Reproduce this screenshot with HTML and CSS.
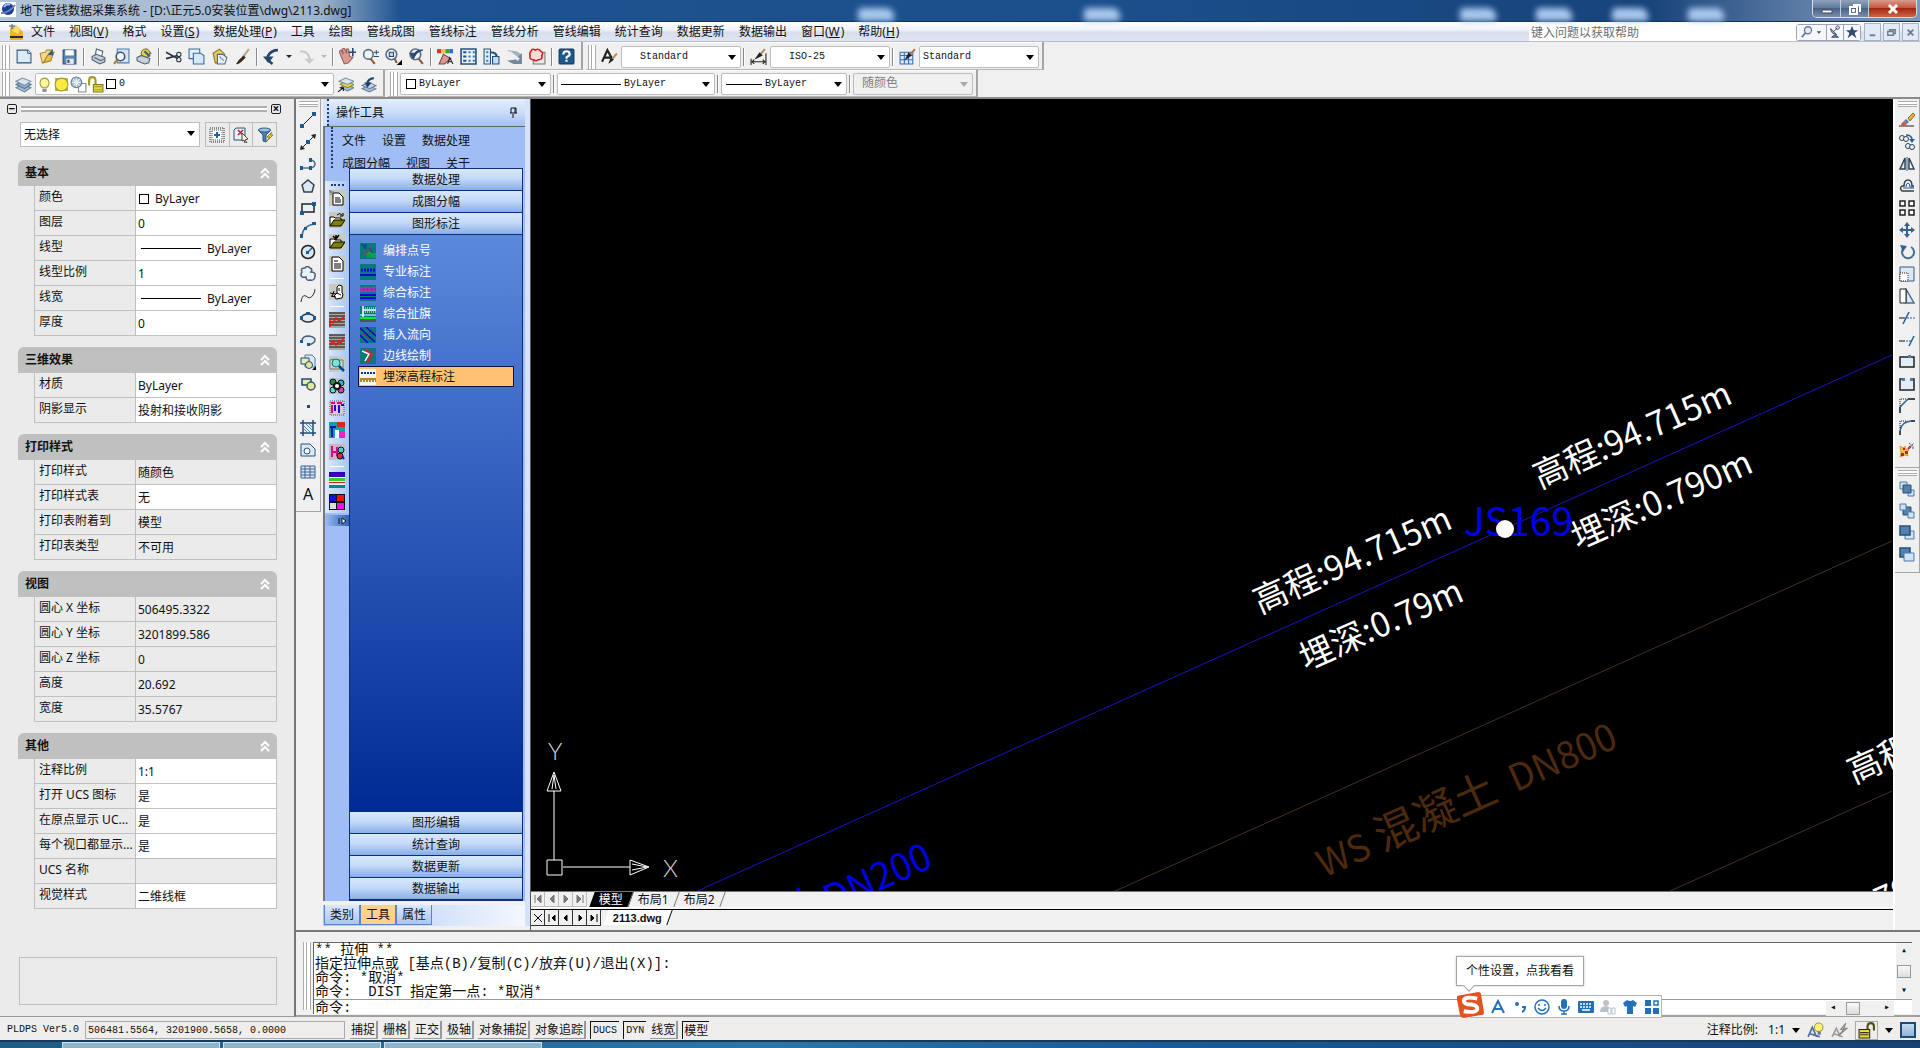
FILE: index.html
```html
<!DOCTYPE html>
<html lang="zh-CN">
<head>
  <meta charset="UTF-8">
  <meta name="viewport" content="width=device-width, initial-scale=1">
  <title>地下管线数据采集系统 - [D:\正元5.0安装位置\dwg\2113.dwg]</title>
  <link rel="stylesheet" href="styles.css">
</head>
<body>
  <header class="titlebar">
    <svg class="app-icon" viewBox="0 0 16 16"><path fill="#fff" d="M0 1h16v15H0z"/><circle cx="8" cy="8" r="6" fill="#1b3c9c"/><path d="M4 6q3-4 6-2" stroke="#a9c4f2" stroke-width="2" fill="none"/><path d="M1 12Q9 12 15 4" stroke="#6d85a8" stroke-width="2" fill="none"/></svg>
    <h1>地下管线数据采集系统 - [D:\正元5.0安装位置\dwg\2113.dwg]</h1>
    <div class="desk"><i></i><i></i><i></i><i></i><i></i><i></i></div>
    <div class="window-buttons">
      <button aria-label="最小化"><svg viewBox="0 0 14 14"><path d="M2 8h10v3H2z" fill="#fff" stroke="#445"/></svg></button>
      <button aria-label="还原"><svg viewBox="0 0 14 14"><path d="M5 3h7v7M2 5h7v7H2zM5 8h1v1H5z" fill="none" stroke="#fff" stroke-width="2"/></svg></button>
      <button class="close" aria-label="关闭"><svg viewBox="0 0 14 14"><path d="M3 3l8 8M11 3l-8 8" stroke="#fff" stroke-width="3"/></svg></button>
    </div>
  </header>

  <nav class="menubar">
    <svg class="doc-icon" viewBox="0 0 16 16"><path fill="#f2b322" d="M2 4l6-3 7 7v8H2z"/><path fill="#f9dc6b" d="M8 1l4 5-2 4-6-3z"/><path fill="#1e3158" d="M2 12h13v2H2z"/><path d="M4 0v5M1 2h6" stroke="#3a5da0"/></svg>
    <a href="#">文件</a>
    <a href="#">视图(<u>V</u>)</a>
    <a href="#">格式</a>
    <a href="#">设置(<u>S</u>)</a>
    <a href="#">数据处理(<u>P</u>)</a>
    <a href="#">工具</a>
    <a href="#">绘图</a>
    <a href="#">管线成图</a>
    <a href="#">管线标注</a>
    <a href="#">管线分析</a>
    <a href="#">管线编辑</a>
    <a href="#">统计查询</a>
    <a href="#">数据更新</a>
    <a href="#">数据输出</a>
    <a href="#">窗口(<u>W</u>)</a>
    <a href="#">帮助(<u>H</u>)</a>
    <input class="help-search" type="text" placeholder="键入问题以获取帮助" aria-label="帮助搜索">
    <div class="search-buttons">
      <button class="wide" aria-label="搜索"><svg viewBox="0 0 24 16"><circle cx="8" cy="6" r="4" fill="#e4ebf6" stroke="#66758f" stroke-width="1.500"/><path d="M5 9l-4 5" stroke="#66758f" stroke-width="2"/><path d="M18 7h5l-2.500 3z" fill="#444"/></svg></button>
      <button aria-label="通讯中心"><svg viewBox="0 0 16 16"><path d="M3 4q0 6 7 7z" fill="#9aacc6" stroke="#34466b"/><path d="M6 8l5-5M8 11l-4 3h8z" stroke="#34466b" fill="#6b7fa3"/><circle cx="11" cy="3" r="2" fill="none" stroke="#34466b"/></svg></button>
      <button aria-label="收藏夹"><svg viewBox="0 0 16 16"><path d="M8 1l2 5h5l-4 3 2 6-5-4-5 4 2-6-4-3h5z" fill="#34496f"/></svg></button>
    </div>
    <div class="mdi-buttons">
      <button aria-label="最小化文档"><svg viewBox="0 0 16 16"><path d="M5 11h6" stroke="#6a7c8e" stroke-width="2"/></svg></button>
      <button aria-label="还原文档"><svg viewBox="0 0 16 16"><path d="M6 7V5h6v4h-2M4 7h6v4H4z" fill="none" stroke="#6a7c8e" stroke-width="1.500"/></svg></button>
      <button aria-label="关闭文档"><svg viewBox="0 0 16 16"><path d="M5 5l6 6M11 5l-6 6" stroke="#6a7c8e" stroke-width="2"/></svg></button>
    </div>
  </nav>

  <div class="toolbar-row">
    <div class="toolbar">
      <span class="grip"></span>
      <button aria-label="新建"><svg viewBox="0 0 16 16"><path d="M2 2h10l3 3v9H2z" fill="#dcebf8" stroke="#2f5478"/><path d="M12 2v3h3" fill="#fff" stroke="#2f5478"/></svg></button>
      <button aria-label="打开"><svg viewBox="0 0 16 16"><path d="M4 14L2 5l5-1 1-2h5l-2 9z" fill="#f3d98a" stroke="#b08a35"/><path d="M5 14l4-7 6-3-3 8z" fill="#e8c055" stroke="#a87d28"/><path d="M9 6l5-5v6" fill="#2d5f8c"/></svg></button>
      <button aria-label="保存"><svg viewBox="0 0 16 16"><path d="M2 2h12v13H2z" fill="#5b86ad" stroke="#2b4d70"/><path d="M4 2h8v5H4z" fill="#fff"/><path d="M5 10h7v5H5z" fill="#dfe8f0"/><path d="M6 11h2v3H6z" fill="#2b4d70"/></svg></button>
      <span class="sep"></span>
      <button aria-label="打印"><svg viewBox="0 0 16 16"><path d="M5 7l1-6 6 2-1 5z" fill="#fff" stroke="#4c5f75"/><path d="M2 8l4-2 8 3v4l-5 2-7-4z" fill="#c5cdd6" stroke="#4c5f75"/><path d="M4 9l6 3 4-2" fill="none" stroke="#4c5f75"/></svg></button>
      <button aria-label="预览"><svg viewBox="0 0 16 16"><path d="M4 1h11v13H4z" fill="#d2e4f5" stroke="#4d7ba5"/><circle cx="7" cy="8" r="4" fill="#f2f8ff" stroke="#3b5570" stroke-width="1.500"/><path d="M4 11l-3 4" stroke="#b97730" stroke-width="2"/></svg></button>
      <button aria-label="发布"><svg viewBox="0 0 16 16"><path d="M5 5l5-4 4 4-4 4z" fill="#fff" stroke="#5a6f86"/><circle cx="9" cy="5" r="4" fill="#f0cf3e" stroke="#8b7420"/><path d="M8 3l5 5" stroke="#2d5f8c" stroke-width="2"/><path d="M1 9l4-2 8 3-1 4-4 1-7-3z" fill="#c9d1da" stroke="#4c5f75"/></svg></button>
      <span class="sep"></span>
      <button aria-label="剪切"><svg viewBox="0 0 16 16"><path d="M1 4l11 6M1 10l11-3" stroke="#25303d" stroke-width="1.500"/><circle cx="13" cy="6" r="2" fill="none" stroke="#25303d"/><circle cx="13" cy="11" r="2" fill="none" stroke="#25303d"/></svg></button>
      <button aria-label="复制"><svg viewBox="0 0 16 16"><path d="M1 1h10v9H1z" fill="#e6f0f9" stroke="#3d6a93"/><path d="M5 5h7l3 2v8H5z" fill="#d7e8f6" stroke="#3d6a93"/></svg></button>
      <button aria-label="粘贴"><svg viewBox="0 0 16 16"><path d="M2 5l6-4 5 5-1 8H4z" fill="#e9c95c" stroke="#8e722a"/><path d="M6 6h5l4 3-2 6H6z" fill="#e7eff7" stroke="#4c6a86"/><path d="M8 8l4 4" stroke="#7d97b0"/></svg></button>
      <button aria-label="特性匹配"><svg viewBox="0 0 16 16"><path d="M14 1L8 9" stroke="#b9a68b" stroke-width="2"/><path d="M9 7l2 2-4 4q-3 3-5 2 2-4 7-8z" fill="#3a2a1c"/></svg></button>
      <span class="sep"></span>
      <button aria-label="放弃"><svg viewBox="0 0 16 16"><path d="M9 15q-6-4-4-8 3-5 9-5" fill="none" stroke="#23446d" stroke-width="2.500"/><path d="M0 8h10l-5 6z" fill="#23446d"/></svg></button>
      <button class="drop" aria-label="放弃列表"></button>
      <button aria-label="重做"><svg viewBox="0 0 16 16"><path d="M2 3q9 0 9 9" fill="none" stroke="#c9c9c9" stroke-width="2"/><path d="M6 10h9l-4 5z" fill="#c9c9c9"/></svg></button>
      <button class="drop off" aria-label="重做列表"></button>
      <span class="sep"></span>
      <button aria-label="平移"><svg viewBox="0 0 16 16"><path d="M2 8L0 3l2-1 2 4-1-5 2-1 2 5V1h2l1 7 3 1-4 5-4 1z" fill="#d99a94" stroke="#9c5f5b"/><path d="M13 0v8M9 4h7" stroke="#2c4a74" stroke-width="1.500"/></svg></button>
      <button aria-label="实时缩放"><svg viewBox="0 0 16 16"><circle cx="6" cy="6" r="4.500" fill="#eef4fa" stroke="#5e6f82" stroke-width="1.500"/><path d="M8 10l4 5" stroke="#8a5a30" stroke-width="2"/><path d="M11 4h5M13.500 2v4M11 8h5" stroke="#2c4a74"/></svg></button>
      <button aria-label="窗口缩放"><svg viewBox="0 0 16 16"><circle cx="6" cy="6" r="5" fill="#eef4fa" stroke="#5e6f82" stroke-width="1.500"/><path d="M4 4h4v4H4z" fill="#bcd3ea" stroke="#2c4a74"/><path d="M9 10l2 4" stroke="#8a5a30" stroke-width="2"/><path d="M16 11v5h-5z"/></svg></button>
      <button aria-label="缩放上一个"><svg viewBox="0 0 16 16"><circle cx="7" cy="6" r="5" fill="#eef4fa" stroke="#5e6f82" stroke-width="1.500"/><path d="M10 10l4 5" stroke="#8a5a30" stroke-width="2"/><path d="M2 5h6l-3 5zM5 7q3-6 9-5" fill="#2c4a74" stroke="#2c4a74"/></svg></button>
      <span class="sep"></span>
      <button aria-label="特性"><svg viewBox="0 0 16 16"><path d="M0 1h4v4H0z" fill="#d33"/><path d="M4 1h4v4H4z" fill="#e8c53b"/><path d="M8 1h4v4H8z" fill="#3b9c4c"/><path d="M12 1h3v4h-3z" fill="#36c"/><path d="M2 15l4-9 7 4-6 5z" fill="#d99a94" stroke="#7b4a45"/><path d="M10 15l2-6 3 6M11 13h3" stroke="#222" fill="none"/></svg></button>
      <button aria-label="设计中心"><svg viewBox="0 0 16 16"><path d="M1 1h14v14H1z" fill="#eaf2fa" stroke="#24507c" stroke-width="1.500"/><path d="M3 3h3v2H3zM3 7h3v2H3zM3 11h3v2H3z" fill="#24507c"/><path d="M8 3h2v2H8zM12 3h2v2h-2zM8 7h2v2H8zM12 7h2v2h-2zM8 11h2v2H8zM12 11h2v2h-2z" fill="#3b78b5"/></svg></button>
      <button aria-label="工具选项板"><svg viewBox="0 0 16 16"><path d="M1 1h6v14H1z" fill="#e8f0f8" stroke="#24507c"/><path d="M3 3h2v2H3zM3 7h2v2H3zM3 11h2v2H3z" fill="#3b78b5"/><path d="M7 4q6 0 6 5" fill="none" stroke="#24507c" stroke-width="2"/><path d="M9 8h6v7H9z" fill="#c9dcef" stroke="#24507c"/></svg></button>
      <button aria-label="图纸集"><svg viewBox="0 0 16 16"><path d="M1 2l9 1 5 3-4 3z" fill="#9fb2c2"/><path d="M15 5v10H7l-6-3 7-1z" fill="#74889a"/><path d="M3 4l9 7" stroke="#e9eff5" stroke-width="3"/></svg></button>
      <button aria-label="标记集"><svg viewBox="0 0 16 16"><path d="M4 4h11v11H4z" fill="#e3e8ee" stroke="#777"/><path d="M2 3q1-3 4-1 3-2 5 1 3 2 1 4 1 4-3 4-3 2-5 0-4 0-3-4-1-2 1-4z" fill="#f7dada" stroke="#c22" stroke-width="1.500"/></svg></button>
      <span class="sep"></span>
      <button aria-label="帮助"><svg viewBox="0 0 16 16"><rect x="1" y="1" width="14" height="14" rx="1" fill="#1f5788" stroke="#143b60"/><path d="M5 6q0-3 3-3t3 3q0 1-2 2-1 0-1 2M8 11v2" fill="none" stroke="#fff" stroke-width="2"/></svg></button>
    </div>
    <div class="toolbar">
      <span class="grip"></span>
      <button aria-label="文字样式"><svg viewBox="0 0 16 16"><path d="M1 13L6 2l5 9M3 9h6" fill="none" stroke="#222" stroke-width="2"/><path d="M15 5l-5 6" stroke="#b58d5a" stroke-width="2"/><path d="M9 9l3 2-5 4z" fill="#222"/></svg></button>
      <div class="combo style indent"><select aria-label="文字样式"><option>Standard</option></select></div>
      <span class="sep"></span>
      <button aria-label="标注样式"><svg viewBox="0 0 16 16"><path d="M14 1L9 7" stroke="#b58d5a" stroke-width="2"/><path d="M9 4l3 3-8 4z" fill="#222"/><path d="M1 10v6M15 5v11M2 13h12M4 11l-2 2 2 2M12 11l2 2-2 2" stroke="#222" fill="none"/></svg></button>
      <div class="combo style indent"><select aria-label="标注样式"><option>ISO-25</option></select></div>
      <span class="sep"></span>
      <button aria-label="表格样式"><svg viewBox="0 0 16 16"><path d="M1 4h12v11H1z" fill="#dbe8f7" stroke="#3b6fae"/><path d="M1 7h12M1 11h12M5 4v11M9 4v11" stroke="#3b6fae"/><path d="M15 1l-5 6" stroke="#a87a44" stroke-width="2"/><path d="M9 4l3 3-7 5z" fill="#222"/></svg></button>
      <div class="combo style"><select aria-label="表格样式"><option>Standard</option></select></div>
    </div>
  </div>

  <div class="toolbar-row">
    <div class="toolbar">
      <span class="grip"></span>
      <button aria-label="图层特性"><svg viewBox="0 0 16 16"><path d="M1 11l6-3 8 3-6 4z" fill="#a9bccd" stroke="#64809a"/><path d="M1 8l6-3 8 3-6 4z" fill="#8fb0d0" stroke="#50708f"/><path d="M1 5l6-3 8 3-6 4z" fill="#d9e4ee" stroke="#7792aa"/></svg></button>
      <div class="combo layer">
        <svg viewBox="0 0 16 16"><path d="M6 11Q3 8 4 5q1-3 4-3t4 3q1 3-2 6z" fill="#fdf7a0" stroke="#a3953a"/><path d="M6 12h4v3H6z" fill="#8d939b"/></svg>
        <svg viewBox="0 0 16 16"><path d="M2 2h12v12H2z" fill="#9bb04a"/><circle cx="8" cy="8" r="6" fill="#f6e943" stroke="#a89a24"/></svg>
        <svg viewBox="0 0 16 16"><path d="M8 7h7v8H8z" fill="#fff" stroke="#888"/><circle cx="6" cy="6" r="5" fill="#a9bdd0" stroke="#667f96"/><path d="M2 6h8M6 2v8M3 3l6 6M9 3L3 9" stroke="#e9eff5"/></svg>
        <svg viewBox="0 0 16 16"><path d="M2 9V4q0-3 3-3t3 3v4" fill="none" stroke="#a39a28" stroke-width="2"/><path d="M6 8h9v7H6z" fill="#e8dc3c" stroke="#7d761b"/><path d="M7 10h7M7 13h7" stroke="#a39a28"/></svg>
        <span class="swatch"></span>
        <select aria-label="图层"><option>0</option></select>
      </div>
      <button aria-label="置为当前"><svg viewBox="0 0 16 16"><path d="M3 11l5-3 8 3-6 3z" fill="#a9bccd" stroke="#64809a"/><path d="M3 8l5-3 8 3-6 3z" fill="#e9d84a" stroke="#94871e"/><path d="M2 5l6-3 8 3-6 3z" fill="#d9e4ee" stroke="#7792aa"/><path d="M1 15l5-4M3 11h3v3" stroke="#111" fill="none"/></svg></button>
      <button aria-label="上一个图层"><svg viewBox="0 0 16 16"><path d="M2 12l6-3 7 3-6 3z" fill="#a9bccd" stroke="#64809a"/><path d="M2 9l6-3 7 3-6 3z" fill="#c9d8e6" stroke="#64809a"/><path d="M4 6h7l-4 5z" fill="#23446d"/><path d="M7 7q0-4 6-5" fill="none" stroke="#23446d" stroke-width="2"/></svg></button>
    </div>
    <div class="toolbar">
      <span class="grip"></span>
      <div class="combo color"><span class="swatch"></span><select aria-label="颜色"><option>ByLayer</option></select></div>
      <span class="sep"></span>
      <div class="combo linetype"><span class="stroke long"></span><select aria-label="线型"><option>ByLayer</option></select></div>
      <span class="sep"></span>
      <div class="combo weight"><span class="stroke"></span><select aria-label="线宽"><option>ByLayer</option></select></div>
      <span class="sep"></span>
      <div class="combo style plot"><select aria-label="打印样式" disabled><option>随颜色</option></select></div>
    </div>
  </div>

  <div class="workspace">
    <aside class="properties">
      <div class="palette-head">
        <button aria-label="折叠">−</button>
        <span class="rails"></span>
        <button aria-label="关闭">×</button>
      </div>
      <div class="selection">
        <div class="combo"><select aria-label="选择对象"><option>无选择</option></select></div>
        <div class="selection-buttons">
          <button aria-label="快速选择"><svg viewBox="0 0 16 16"><path d="M1 1h14v14H1z" fill="none" stroke="#222" stroke-dasharray="1 1"/><path d="M3 3h10v10H3z" fill="#fff" stroke="#456" stroke-dasharray="1 1"/><path d="M8 5v6M5 8h6" stroke="#2560a0" stroke-width="2"/></svg></button>
          <button aria-label="选择对象"><svg viewBox="0 0 16 16"><path d="M3 1h9v12H1V3z" fill="#e4effa" stroke="#34506e"/><path d="M5 3l5 5M10 3L5 8" stroke="#b22" stroke-width="1.500"/><path d="M9 6l6 6-3 1 2 3-2 0-1-3-2 1z" fill="#fffbd0" stroke="#444"/></svg></button>
          <button aria-label="过滤"><svg viewBox="0 0 16 16"><path d="M1 3l5 5v6l3 1V8l5-5z" fill="#4b7fb2" stroke="#2f587f"/><ellipse cx="7.500" cy="3" rx="6" ry="2" fill="#9cc0e2" stroke="#2f587f"/><path d="M15 5l-5 5h3l-4 5 7-7h-3z" fill="#ffe23b" stroke="#8f7a13"/></svg></button>
        </div>
      </div>

      <h2>基本 <svg viewBox="0 0 10 12"><path d="M1 6l4-4 4 4M1 11l4-4 4 4"/></svg></h2>
      <table>
        <tr><th>颜色</th><td><span class="swatch"></span>ByLayer</td></tr>
        <tr><th>图层</th><td>0</td></tr>
        <tr><th>线型</th><td><span class="stroke long"></span>ByLayer</td></tr>
        <tr><th>线型比例</th><td>1</td></tr>
        <tr><th>线宽</th><td><span class="stroke long"></span>ByLayer</td></tr>
        <tr><th>厚度</th><td>0</td></tr>
      </table>
      <h2>三维效果 <svg viewBox="0 0 10 12"><path d="M1 6l4-4 4 4M1 11l4-4 4 4"/></svg></h2>
      <table>
        <tr><th>材质</th><td>ByLayer</td></tr>
        <tr><th>阴影显示</th><td>投射和接收阴影</td></tr>
      </table>
      <h2>打印样式 <svg viewBox="0 0 10 12"><path d="M1 6l4-4 4 4M1 11l4-4 4 4"/></svg></h2>
      <table>
        <tr class="locked"><th>打印样式</th><td>随颜色</td></tr>
        <tr><th>打印样式表</th><td>无</td></tr>
        <tr class="locked"><th>打印表附着到</th><td>模型</td></tr>
        <tr class="locked"><th>打印表类型</th><td>不可用</td></tr>
      </table>
      <h2>视图 <svg viewBox="0 0 10 12"><path d="M1 6l4-4 4 4M1 11l4-4 4 4"/></svg></h2>
      <table>
        <tr class="locked"><th>圆心 X 坐标</th><td>506495.3322</td></tr>
        <tr class="locked"><th>圆心 Y 坐标</th><td>3201899.586</td></tr>
        <tr class="locked"><th>圆心 Z 坐标</th><td>0</td></tr>
        <tr class="locked"><th>高度</th><td>20.692</td></tr>
        <tr class="locked"><th>宽度</th><td>35.5767</td></tr>
      </table>
      <h2>其他 <svg viewBox="0 0 10 12"><path d="M1 6l4-4 4 4M1 11l4-4 4 4"/></svg></h2>
      <table>
        <tr><th>注释比例</th><td>1:1</td></tr>
        <tr><th>打开 UCS 图标</th><td>是</td></tr>
        <tr><th>在原点显示 UC...</th><td>是</td></tr>
        <tr><th>每个视口都显示...</th><td>是</td></tr>
        <tr class="locked"><th>UCS 名称</th><td></td></tr>
        <tr><th>视觉样式</th><td>二维线框</td></tr>
      </table>
      <div class="hint"></div>
    </aside>

    <main class="main">
      <div class="upper">
        <div class="side-column">
          <div class="side-toolbar">
            <span class="grip-h"></span>
            <button aria-label="直线"><svg viewBox="0 0 16 16"><path d="M2 14L14 2" stroke="#222"/><path d="M0 12h4v4H0zM12 0h4v4h-4z" fill="#1c5a94"/></svg></button>
            <button aria-label="构造线"><svg viewBox="0 0 16 16"><path d="M1 15L15 1" stroke="#222"/><path d="M0 16l1-5 4 4zM16 0l-1 5-4-4z" fill="#222"/><path d="M6 6h4v4H6z" fill="#1c5a94"/></svg></button>
            <button aria-label="多段线"><svg viewBox="0 0 16 16"><path d="M1 12h10q4-1 4-4t-4-4" fill="none" stroke="#4b7295" stroke-width="1.500"/><path d="M0 10h3v4H0zM9 10h3v4H9zM9 2h3v4H9z" fill="#1c5a94"/></svg></button>
            <button aria-label="正多边形"><svg viewBox="0 0 16 16"><path d="M8 2l6 5-2 7H4L2 7z" fill="#dce9f5" stroke="#33414f" stroke-width="1.500"/></svg></button>
            <button aria-label="矩形"><svg viewBox="0 0 16 16"><path d="M2 4h12v8H2z" fill="#e8f1f9" stroke="#222" stroke-width="1.500"/><path d="M0 11h4v4H0zM12 2h4v4h-4z" fill="#1c5a94"/></svg></button>
            <button aria-label="圆弧"><svg viewBox="0 0 16 16"><path d="M2 15Q2 4 14 2" fill="none" stroke="#4b7295" stroke-width="1.500"/><path d="M0 12h3v4H0zM4 5h3v3H4zM12 0h4v3h-4z" fill="#1c5a94"/></svg></button>
            <button aria-label="圆"><svg viewBox="0 0 16 16"><circle cx="8" cy="8" r="6.500" fill="#dce9f5" stroke="#222" stroke-width="1.500"/><path d="M8 8l4-4" stroke="#1c5a94" stroke-width="1.500"/><path d="M6 7h3v3H6z" fill="#1c5a94"/></svg></button>
            <button aria-label="修订云线"><svg viewBox="0 0 16 16"><path d="M2 6q-2-4 3-4 2-3 5 0 3 1 1 4 5 0 4 4 0 5-5 4-4 1-4-3-5 1-5-2 0-2 1-3z" fill="#e8f1f9" stroke="#4b6076" stroke-width="1.500"/></svg></button>
            <button aria-label="样条曲线"><svg viewBox="0 0 16 16"><path d="M1 14q1-8 5-6 4 4 7-1 2-3 2-6" fill="none" stroke="#333"/></svg></button>
            <button aria-label="椭圆"><svg viewBox="0 0 16 16"><ellipse cx="8" cy="8" rx="6.500" ry="4" fill="#e1ecf6" stroke="#333" stroke-width="1.500"/><path d="M0 6h3v4H0zM13 6h3v4h-3zM6 2h4v3H6z" fill="#1c5a94"/></svg></button>
            <button aria-label="椭圆弧"><svg viewBox="0 0 16 16"><path d="M2 9q0-5 7-5 6 1 6 4t-6 5" fill="#e1ecf6" stroke="#4b6076" stroke-width="1.500"/><path d="M0 8h3v3H0zM7 11h3v3H7z" fill="#1c5a94"/></svg></button>
            <button aria-label="插入块"><svg viewBox="0 0 16 16"><path d="M5 1h7l3 3v9H5z" fill="#dce9f5" stroke="#4d7ba5"/><path d="M1 4h8v6H1z" fill="#e9eea8" stroke="#1c4b78"/><circle cx="9" cy="11" r="3.500" fill="#e3e69a" stroke="#1c4b78"/><path d="M16 12v4h-4z"/></svg></button>
            <button aria-label="创建块"><svg viewBox="0 0 16 16"><path d="M2 3h9v6H2z" fill="#e9eea8" stroke="#1c4b78" stroke-width="1.500"/><circle cx="11" cy="10" r="4" fill="#e3e69a" stroke="#3f5667" stroke-width="1.500"/></svg></button>
            <button aria-label="点"><svg viewBox="0 0 16 16"><path d="M7 7h3v3H7z" fill="#1c4b78"/></svg></button>
            <button aria-label="图案填充"><svg viewBox="0 0 16 16"><path d="M3 0v16M13 0v16M0 3h16M0 13h16" stroke="#1c4b78" stroke-width="1.500"/><path d="M4 6l6 6M4 9l3 3M6 4l6 6M9 4l3 3" stroke="#4a80b0"/></svg></button>
            <button aria-label="面域"><svg viewBox="0 0 16 16"><path d="M1 2h9l5 5v7H1z" fill="#dce9f5" stroke="#24507c"/><circle cx="7" cy="9" r="3" fill="#fff" stroke="#24507c"/></svg></button>
            <button aria-label="表格"><svg viewBox="0 0 16 16"><path d="M1 2h14v12H1z" fill="#dbe8f7" stroke="#3b6090"/><path d="M1 5h14M1 8h14M1 11h14M5 2v12M10 2v12" stroke="#3b6090"/></svg></button>
            <button class="letter" aria-label="多行文字">A</button>
          </div>
        </div>

        <section class="tool-panel">
          <h2><span>操作工具</span><svg viewBox="0 0 10 12"><path d="M3 1h5v5M2 6h7M3 1v5M5 7v4M7 1v5" fill="none" stroke="#111"/></svg></h2>
          <div class="panel-body">
            <nav class="panel-menu">
              <a href="#">文件</a><a href="#">设置</a><a href="#">数据处理</a><br>
              <a href="#">成图分幅</a><a href="#">视图</a><a href="#">关于</a>
            </nav>
            <div class="panel-columns">
              <div class="icon-strip">
                <div class="strip-items">
                  <button aria-label="新建工程"><svg viewBox="0 0 16 16"><path fill="#cbc9bd" d="M0 0h16v16H0z"/><path d="M4 3h6l4 4v8H4z" fill="#fff" stroke="#000"/><path d="M6 8h5M6 10h6M6 12h6" stroke="#000"/><path d="M0 2h5M2 0v5M0 0l4 4" stroke="#777"/></svg></button>
                  <button aria-label="打开工程"><svg viewBox="0 0 16 16"><path fill="#cbc9bd" d="M0 0h16v16H0z"/><path d="M1 14V5h4l1 1h6v2" fill="#ffe" stroke="#000"/><path d="M1 14l4-6h11l-4 6z" fill="#808000" stroke="#000"/><path d="M8 3q3-3 5 0M11 4h3V1" stroke="#000" fill="none"/></svg></button>
                  <button aria-label="关闭工程"><svg viewBox="0 0 16 16"><path fill="#cbc9bd" d="M0 0h16v16H0z"/><path d="M1 14V5h4l1 1h6v2" fill="#ffe" stroke="#000"/><path d="M1 14l4-6h11l-4 6z" fill="#808000" stroke="#000"/><path d="M7 5V1M4 2l3 3 3-4" stroke="#000" stroke-width="1.500" fill="none"/></svg></button>
                  <button aria-label="工程文档"><svg viewBox="0 0 16 16"><path fill="#cbc9bd" d="M0 0h16v16H0z"/><path d="M3 1h7l4 4v10H3z" fill="#fff" stroke="#000"/><path d="M5 5h4M5 8h7M5 10h7M5 12h7" stroke="#000"/></svg></button>
                  <hr>
                  <button aria-label="数据"><svg viewBox="0 0 16 16"><path fill="#cbc9bd" d="M0 0h16v16H0z"/><path d="M8 9V3l2-2 3 1v7l1 1-1 4-6 1-2-3z" fill="#fff" stroke="#000"/><path d="M1 9l6 1M2 12l5 1M5 7l-2 6M8 9l4 2M10 4v3" fill="none" stroke="#000"/></svg></button>
                  <hr>
                  <button aria-label="横断面"><svg viewBox="0 0 16 16"><path fill="#a9a69c" d="M0 0h16v16H0z"/><path d="M0 1h16M0 4h16M0 7h16M0 10h16M0 13h16" stroke="#111"/><path d="M1 15V9l3 2 3-5 3 3 6-5" fill="none" stroke="#e11" stroke-width="1.500"/></svg></button>
                  <button aria-label="纵断面"><svg viewBox="0 0 16 16"><path fill="#a9a69c" d="M0 0h16v16H0z"/><path d="M0 1h16M0 4h16M0 7h16M0 10h16M0 13h16" stroke="#111"/><path d="M1 11l3-4 3 4 3-4 2 2 3-6" fill="none" stroke="#e11" stroke-width="1.500"/></svg></button>
                  <button aria-label="查找"><svg viewBox="0 0 16 16"><path fill="#c4cdc8" d="M0 0h16v16H0z"/><path d="M1 13V4l3-1 2 1h8v9z" fill="#d5d3c4" stroke="#777"/><circle cx="7" cy="7" r="4" fill="#7fdfdf" stroke="#076"/><path d="M10 10l5 5" stroke="#049" stroke-width="2.500"/></svg></button>
                  <button aria-label="查看"><svg viewBox="0 0 16 16"><path fill="#b9c6c2" d="M0 0h16v16H0z"/><circle cx="4" cy="4" r="3" fill="#2a8a4a" stroke="#111"/><circle cx="12" cy="5" r="3" fill="#3ac" stroke="#111"/><circle cx="4" cy="12" r="3" fill="#5dd" stroke="#111"/><circle cx="12" cy="12" r="3" fill="#d3c" stroke="#111"/><circle cx="8" cy="8" r="3" fill="#fff" stroke="#111" stroke-width="2"/></svg></button>
                  <button aria-label="标注"><svg viewBox="0 0 16 16"><path fill="#ddc9d3" d="M1 1h14v14H1z" stroke="#555" stroke-dasharray="1 1"/><path d="M2 3h4M8 3h5M3 5v8" stroke="#d08" stroke-width="2"/><path d="M6 5v6M10 5v8M12 5h3" stroke="#11c" stroke-width="2"/></svg></button>
                  <button aria-label="管线"><svg viewBox="0 0 16 16"><path fill="#17a0a0" d="M0 0h16v16H0z"/><path fill="#d22" d="M8 0h8v5H8z"/><path fill="#e2c" d="M10 9h6v7h-6z"/><path fill="#fff" d="M6 8h4v8H6z"/><path d="M1 5h6M3 5v10" stroke="#11c" stroke-width="2"/></svg></button>
                  <button aria-label="图例"><svg viewBox="0 0 16 16"><path fill="#c8b8c8" d="M0 0h16v16H0z"/><path d="M3 2v11M3 8h6M8 3v9" stroke="#d08" stroke-width="2"/><circle cx="12" cy="6" r="3" fill="#4cc" stroke="#111"/><circle cx="11" cy="12" r="3" fill="#c33" stroke="#111"/><path d="M13 12l2 3" stroke="#11c" stroke-width="2"/></svg></button>
                  <hr>
                  <button aria-label="图层管理"><svg viewBox="0 0 16 16"><path fill="#eee" d="M0 0h16v16H0z"/><path fill="#30b" d="M0 0h16v5H0z"/><path fill="#3c3" d="M0 6h16v3H0z"/><path fill="#c22" d="M0 10h16v1H0z"/><path fill="#088" d="M0 13h16v3H0z"/></svg></button>
                  <button aria-label="颜色管理"><svg viewBox="0 0 16 16"><path fill="#111" d="M0 0h16v16H0z"/><path fill="#11d" d="M1 1h6v6H1z"/><path fill="#e11" d="M8 1h7v6H8z"/><path fill="#ddd" d="M1 9h6v6H1z"/><path fill="#e1e" d="M8 9h7v6H8z"/></svg></button>
                </div>
                <button class="more" aria-label="更多"><svg viewBox="0 0 10 8"><path d="M1 1v6M4 1v6l4-3z" fill="#fff" stroke="#111"/></svg></button>
              </div>
              <div class="outlook">
                <button class="group">数据处理</button>
                <button class="group">成图分幅</button>
                <button class="group">图形标注</button>
                <ul>
                  <li><a href="#"><svg viewBox="0 0 16 16"><path fill="#087878" d="M0 0h16v16H0z"/><path d="M1 2h3v4M6 1v5M9 5l4 5" stroke="#139" fill="none"/><path d="M4 8l3 4 4-8" stroke="#b33" fill="none"/><path d="M8 15v-5h3v5M13 10v5M15 10v5" stroke="#0c2" fill="none"/></svg>编排点号</a></li>
                  <li><a href="#"><svg viewBox="0 0 16 16"><path fill="#087878" d="M0 0h16v16H0z"/><path d="M1 6h14" stroke="#00d" stroke-width="3" stroke-dasharray="2 1"/><path d="M0 11h16" stroke="#00d" stroke-width="2"/></svg>专业标注</a></li>
                  <li><a href="#"><svg viewBox="0 0 16 16"><path fill="#087878" d="M0 0h16v16H0z"/><path d="M0 3h16M0 6h16" stroke="#a3c" stroke-width="2" stroke-dasharray="3 1"/><path d="M0 10h16M0 13h16" stroke="#00d" stroke-width="2"/></svg>综合标注</a></li>
                  <li><a href="#"><svg viewBox="0 0 16 16"><path fill="#087878" d="M0 0h16v16H0z"/><path d="M3 0v12M3 4h13" stroke="#fff" stroke-width="1.500"/><path d="M5 2h11M5 6h11" stroke="#fff" stroke-dasharray="1 1"/><path d="M0 9h16" stroke="#fff"/><path d="M0 12h16" stroke="#0e2" stroke-width="2"/><path d="M0 15h16" stroke="#933"/></svg>综合扯旗</a></li>
                  <li><a href="#"><svg viewBox="0 0 16 16"><path fill="#087878" d="M0 0h16v16H0z"/><path d="M0 1l15 14M6 0l10 9M0 8l8 8" stroke="#00d" stroke-width="1.500"/><path d="M3 6l6 6M9 5l3 1" stroke="#733"/></svg>插入流向</a></li>
                  <li><a href="#"><svg viewBox="0 0 16 16"><path fill="#087878" d="M0 0h16v16H0z"/><path d="M2 3l7 3-4 7" fill="none" stroke="#fff" stroke-width="1.500"/><path d="M5 1l7 5-5 9" fill="none" stroke="#d22" stroke-width="2"/></svg>边线绘制</a></li>
                  <li><a class="selected" href="#"><svg viewBox="0 0 16 16"><path fill="#f4f4f4" d="M0 0h16v16H0z"/><path d="M1 4h14" stroke="#137" stroke-width="2" stroke-dasharray="2 1"/><path d="M0 10h16" stroke="#a78a22" stroke-width="2"/><path d="M0 12h16" stroke="#a78a22" stroke-width="2" stroke-dasharray="2 1"/></svg>埋深高程标注</a></li>
                </ul>
                <button class="group">图形编辑</button>
                <button class="group">统计查询</button>
                <button class="group">数据更新</button>
                <button class="group">数据输出</button>
              </div>
            </div>
          </div>
          <div class="panel-tabs"><button>类别</button><button class="active">工具</button><button>属性</button></div>
        </section>

        <section class="drawing">
          <svg class="model-space" role="img" aria-label="管线图">
            <g class="pipes">
              <path class="water" d="M164 793L1361 256"/>
              <path d="M582 793L1361 442M1137 793L1361 692"/>
            </g>
            <g class="note">
              <text transform="translate(729 515) rotate(-24)">高程:94.715m</text>
              <text transform="translate(1009 390) rotate(-24)">高程:94.715m</text>
              <text transform="translate(1047 451) rotate(-24)">埋深:0.790m</text>
              <text transform="translate(775 572) rotate(-24)">埋深:0.79m</text>
              <text transform="translate(1323 685) rotate(-24)">高程</text>
              <text transform="translate(1350 814) rotate(-24)">79</text>
            </g>
            <text class="point-name" x="933" y="437">JS169</text>
            <circle cx="974" cy="430" r="9" fill="#fff"/>
            <g class="pipe-name">
              <text transform="translate(793 779) rotate(-24)">WS<tspan class="han" x="64">混凝土</tspan><tspan x="210">DN800</tspan></text>
              <text class="water" transform="translate(243 839) rotate(-24)"><tspan class="han" x="12">铁</tspan><tspan x="62">DN200</tspan></text>
            </g>
            <g class="ucs">
              <path d="M16 761h15v15H16zM23 761V692M16 692l7-19 7 19zM32 768h67M99 761v15l19-8zM21 690l2-14 2 14M101 765l15 3-15 3"/>
              <text x="17" y="661">Y</text>
              <text x="132" y="778">X</text>
            </g>
          </svg>
          <div class="layout-tabs">
            <div class="tab-nav">
              <button aria-label="第一个布局"><svg viewBox="0 0 12 12"><path d="M3 2v8M9 2v8L5 6z"/></svg></button>
              <button aria-label="上一个布局"><svg viewBox="0 0 12 12"><path d="M8 2v8L4 6z"/></svg></button>
              <button aria-label="下一个布局"><svg viewBox="0 0 12 12"><path d="M4 2v8l4-4z"/></svg></button>
              <button aria-label="最后一个布局"><svg viewBox="0 0 12 12"><path d="M9 2v8M3 2v8l4-4z"/></svg></button>
            </div>
            <button class="layout active"><span>模型</span></button>
            <button class="layout"><span>布局1</span></button>
            <button class="layout"><span>布局2</span></button>
          </div>
          <div class="doc-tabs">
            <div class="tab-nav">
              <button aria-label="关闭图纸"><svg viewBox="0 0 12 12"><path d="M2 2l8 8M10 2l-8 8"/></svg></button>
              <button aria-label="第一张图"><svg viewBox="0 0 12 12"><path d="M3 2v8M9 3v6L6 6z"/></svg></button>
              <button aria-label="上一张图"><svg viewBox="0 0 12 12"><path d="M7 3v6L4 6z"/></svg></button>
              <button aria-label="下一张图"><svg viewBox="0 0 12 12"><path d="M5 3v6l3-3z"/></svg></button>
              <button aria-label="最后一张图"><svg viewBox="0 0 12 12"><path d="M9 2v8M3 3v6l3-3z"/></svg></button>
            </div>
            <button class="doc"><span>2113.dwg</span></button>
          </div>
        </section>

        <div class="side-column modify">
          <div class="side-toolbar">
            <span class="grip-h"></span>
            <button aria-label="删除"><svg viewBox="0 0 16 16"><path d="M0 14h15" stroke="#222"/><path d="M9 6l5-5 2 2-5 6z" fill="#e5b23a" stroke="#8a6a1e"/><path d="M7 7l3 3-2 2-3-3z" fill="#4b7fb2"/><path d="M5 9l3 3-2 2H3L2 12z" fill="#c55"/></svg></button>
            <button aria-label="复制"><svg viewBox="0 0 16 16"><g fill="#e8f1f9" stroke="#33414f"><circle cx="3" cy="4" r="2.500"/><circle cx="7" cy="5" r="2.500"/><circle cx="9" cy="12" r="2.500"/><circle cx="13" cy="13" r="2.500"/></g><path d="M7 1q6 0 6 5" fill="none" stroke="#24609a" stroke-width="1.500"/><path d="M10 5h6l-3 4z" fill="#24609a"/></svg></button>
            <button aria-label="镜像"><svg viewBox="0 0 16 16"><path d="M6 2v11H1z" fill="#dce9f5" stroke="#33414f" stroke-width="1.500"/><path d="M10 2v11h5z" fill="#fff" stroke="#33414f" stroke-width="1.500"/><path d="M8 1v14" stroke="#24609a"/></svg></button>
            <button aria-label="偏移"><svg viewBox="0 0 16 16"><path d="M15 13H3q-3-3 0-5h2q0-6 4-6t4 6h2" fill="none" stroke="#33414f" stroke-width="1.500"/><path d="M15 10H4M7 9q0-4 2-4t2 4h4" fill="none" stroke="#24609a"/></svg></button>
            <button aria-label="阵列"><svg viewBox="0 0 16 16"><path d="M1 1h5v5H1zM10 1h5v5h-5zM1 10h5v5H1zM10 10h5v5h-5z" fill="#fff" stroke="#222" stroke-width="1.500"/></svg></button>
            <button aria-label="移动"><svg viewBox="0 0 16 16"><path d="M8 2v12M2 8h12" stroke="#36618f" stroke-width="2"/><path d="M8 0l3 4H5zM8 16l3-4H5zM0 8l4-3v6zM16 8l-4-3v6z" fill="#36618f"/></svg></button>
            <button aria-label="旋转"><svg viewBox="0 0 16 16"><path d="M4 5a6 6 0 1 0 8-2" fill="none" stroke="#4c7197" stroke-width="2"/><path d="M1 1l7 1-4 6z" fill="#36618f"/></svg></button>
            <button aria-label="缩放"><svg viewBox="0 0 16 16"><path d="M1 1h14v14H1z" fill="#dce9f5" stroke="#3a5878"/><path d="M1 7h8v8H1z" fill="#fff" stroke="#222" stroke-dasharray="1 1"/></svg></button>
            <button aria-label="拉伸"><svg viewBox="0 0 16 16"><path d="M7 1l8 14H7z" fill="#dce9f5" stroke="#4d6d8e" stroke-width="1.500"/><path d="M1 1h6v14H1z" fill="#fff" stroke="#222"/></svg></button>
            <button aria-label="修剪"><svg viewBox="0 0 16 16"><path d="M0 8h6" stroke="#111"/><path d="M8 8h8" stroke="#24609a" stroke-dasharray="2 1"/><path d="M4 14l6-12" stroke="#24609a" stroke-width="1.500"/></svg></button>
            <button aria-label="延伸"><svg viewBox="0 0 16 16"><path d="M0 9h6" stroke="#111"/><path d="M7 9h5" stroke="#24609a" stroke-dasharray="2 1"/><path d="M10 14l5-10" stroke="#24609a" stroke-width="1.500"/></svg></button>
            <button aria-label="打断于点"><svg viewBox="0 0 16 16"><path d="M1 3h14v10H1z" fill="#e3edf7" stroke="#222" stroke-width="1.500"/><path d="M9 1h3v3H9z" fill="#4b7fb2"/></svg></button>
            <button aria-label="打断"><svg viewBox="0 0 16 16"><path d="M4 3H1v11h14V3h-3" fill="#e3edf7" stroke="#222" stroke-width="1.500"/><path d="M3 2h3v3H3zM11 2h3v3h-3z" fill="#4b7fb2"/></svg></button>
            <button aria-label="倒角"><svg viewBox="0 0 16 16"><path d="M1 15V9M9 1h7" stroke="#111" stroke-width="1.500"/><path d="M1 9l8-8" stroke="#24609a" stroke-width="1.500"/><path d="M1 8V1h7" fill="none" stroke="#111" stroke-dasharray="1 1"/></svg></button>
            <button aria-label="圆角"><svg viewBox="0 0 16 16"><path d="M1 15v-4M12 1h4" stroke="#111" stroke-width="1.500"/><path d="M1 11Q2 2 12 1" fill="none" stroke="#24609a" stroke-width="1.500"/><path d="M1 8V1h7" fill="none" stroke="#111" stroke-dasharray="1 1"/></svg></button>
            <button aria-label="分解"><svg viewBox="0 0 16 16"><path d="M1 4l3 2 2-2 1 3 3 1-2 2 1 4-3-1-5 2 1-4z" fill="#f3c24a" stroke="#d8a13a"/><path d="M2 11h3v3H2zM6 9h3v3H6zM4 6h2v2H4z" fill="#b22"/><path d="M9 7l3-3" stroke="#a33" stroke-width="2"/><path d="M11 5l4-4M10 1l5 4M13 6h2" stroke="#555" stroke-dasharray="2 1"/></svg></button>
          </div>
          <div class="side-toolbar">
            <span class="grip-h"></span>
            <button aria-label="前置"><svg viewBox="0 0 16 16"><path d="M1 1h7v7H1zM9 9h6v6H9z" fill="#d0e2f3" stroke="#4d7ba5"/><path d="M4 4h8v8H4z" fill="#5482ad" stroke="#24507c"/></svg></button>
            <button aria-label="后置"><svg viewBox="0 0 16 16"><path d="M4 4h8v8H4z" fill="#5482ad" stroke="#24507c"/><path d="M1 1h6v6H1zM9 9h6v6H9z" fill="#d0e2f3" stroke="#4d7ba5"/></svg></button>
            <button aria-label="置于对象之上"><svg viewBox="0 0 16 16"><path d="M6 6h9v8H6z" fill="#d0e2f3" stroke="#4d7ba5"/><path d="M1 1h10v9H1z" fill="#5482ad" stroke="#24507c" stroke-width="1.500"/></svg></button>
            <button aria-label="置于对象之下"><svg viewBox="0 0 16 16"><path d="M1 1h10v9H1z" fill="#5482ad" stroke="#24507c" stroke-width="1.500"/><path d="M5 6h10v8H5z" fill="#d0e2f3" stroke="#4d7ba5"/></svg></button>
          </div>
        </div>
      </div>

      <section class="command">
        <span class="grip"></span>
        <div class="command-window">
          <div class="history">
            <div class="lines">
              <p>** 拉伸 **</p>
              <p>指定拉伸点或 [基点(B)/复制(C)/放弃(U)/退出(X)]:</p>
              <p>命令: *取消*</p>
              <p>命令:  DIST 指定第一点: *取消*</p>
            </div>
            <div class="scroll vertical"><span>▴</span><b></b><span>▾</span></div>
          </div>
          <div class="prompt">
            <label for="cmd">命令:</label>
            <input id="cmd" type="text" autocomplete="off">
            <div class="scroll"><span>◂</span><b></b><span>▸</span></div>
          </div>
        </div>
      </section>
    </main>
  </div>

  <footer class="statusbar">
    <span class="version">PLDPS Ver5.0</span>
    <output class="coords">506481.5564, 3201900.5658, 0.0000</output>
    <button>捕捉</button>
    <button>栅格</button>
    <button>正交</button>
    <button>极轴</button>
    <button>对象捕捉</button>
    <button>对象追踪</button>
    <button class="on latin">DUCS</button>
    <button class="on latin">DYN</button>
    <button>线宽</button>
    <button class="on">模型</button>
    <div class="status-right">
      <span>注释比例:</span>
      <span class="scale">1:1</span>
      <i class="triangle"></i>
      <svg viewBox="0 0 16 16"><path d="M1 14l4-9 4 9M3 11l9 3" fill="none" stroke="#4a6fa5" stroke-width="1.500"/><circle cx="11" cy="5" r="4" fill="#fdf27a" stroke="#a3953a"/><path d="M10 9h3v3h-3z" fill="#777"/></svg>
      <svg viewBox="0 0 16 16"><path d="M1 14l4-8 4 8M3 11l8 3" fill="none" stroke="#999" stroke-width="1.500"/><path d="M14 1l-5 6h3l-5 6 8-7h-3z" fill="#bbb" stroke="#888"/></svg>
      <span class="lock"><svg viewBox="0 0 16 16"><path d="M9 7V4q0-3 3-3t3 3v4" fill="none" stroke="#555018" stroke-width="2"/><path d="M1 7h10v8H1z" fill="#ecd93a" stroke="#222"/><path d="M2 10h8M2 12h8" stroke="#333"/></svg></span>
      <i class="triangle"></i>
      <button class="clean" aria-label="全屏显示"></button>
    </div>
  </footer>

  <div class="taskbar"><i></i><i></i><i></i></div>

  <div class="ime">
    <div class="ime-tip">个性设置，点我看看</div>
    <div class="ime-bar">
      <svg class="ime-logo" viewBox="0 0 28 28"><path d="M1 5L22 1q3 0 3 3l3 18q0 3-3 3L7 28q-3 0-4-3L0 9q-1-3 1-4z" fill="#e4521f"/><path d="M21 8Q8 5 7 10q0 4 8 4 7 1 6 5-2 4-14 2" fill="none" stroke="#fff" stroke-width="4"/></svg>
      <svg viewBox="0 0 16 16"><path d="M2 14L8 2l6 12M4 10h8" fill="none" stroke="#2470b8" stroke-width="2"/></svg>
      <svg viewBox="0 0 16 16"><circle cx="5" cy="5" r="2" fill="#2470b8"/><path d="M10 8h3q0 4-3 5" fill="none" stroke="#2470b8" stroke-width="2"/></svg>
      <svg viewBox="0 0 16 16"><circle cx="8" cy="8" r="7" fill="none" stroke="#2470b8" stroke-width="1.500"/><path d="M5 5v2M11 5v2M4 9q4 5 8 0" fill="none" stroke="#2470b8" stroke-width="1.500"/></svg>
      <svg viewBox="0 0 16 16"><rect x="5" y="0" width="6" height="10" rx="3" fill="#2470b8"/><path d="M3 7q0 5 5 5t5-5M8 12v3M5 15h6" fill="none" stroke="#2470b8" stroke-width="1.500"/></svg>
      <svg viewBox="0 0 16 16"><rect x="0" y="2" width="16" height="12" rx="1" fill="#2470b8"/><path d="M2 5h12M2 8h12" stroke="#fff" stroke-width="1.500" stroke-dasharray="2 1"/><path d="M4 11h8" stroke="#fff" stroke-width="1.500"/></svg>
      <svg viewBox="0 0 16 16"><circle cx="6" cy="4" r="3" fill="#b9c2cc"/><path d="M0 13q0-6 6-6 4 0 4 6z" fill="#b9c2cc"/><path d="M8 9h3v6H8zM12 9h3v6h-3z" fill="#fff" stroke="#b9c2cc"/></svg>
      <svg viewBox="0 0 16 16"><path d="M1 4l4-3q3 2 6 0l4 3-2 4-2-1v8H5V7L3 8z" fill="#2470b8"/></svg>
      <svg viewBox="0 0 16 16"><path d="M1 1h6v6H1zM1 9h6v6H1zM9 9h6v6H9z" fill="#2470b8"/><path d="M10 2h4v4h-4z" fill="none" stroke="#2470b8" stroke-width="1.500"/></svg>
    </div>
  </div>
</body>
</html>
```

FILE: styles.css
```css
* {
  margin: 0;
  padding: 0;
  box-sizing: border-box;
}

body {
  height: 100vh;
  display: flex;
  flex-direction: column;
  overflow: hidden;
  position: relative;
  background: #f0f0f0;
  color: #111;
  font-family: "Noto Sans", "Noto Sans CJK SC", sans-serif;
  font-size: 12px;
  line-height: 16px;
}

button,
select,
input {
  font: inherit;
  color: inherit;
  background: none;
  border: none;
  border-radius: 0;
}

button {
  display: flex;
  align-items: center;
  justify-content: center;
  white-space: nowrap;
}

a {
  color: inherit;
  text-decoration: none;
}

svg {
  display: block;
  flex: none;
}

/* title bar */
.titlebar {
  display: flex;
  flex: none;
  height: 22px;
  padding-right: 3px;
  background: linear-gradient(90deg, #b4c4d8 0, #9fb4cc 320px, #1d5390 400px, #1b4f8c 1100px, #17437a 1650px, #5b7ba5 1800px, #7d98ba);
  border-bottom: 1px solid #16304f;
}

.app-icon {
  width: 16px;
  height: 18px;
}

.titlebar h1 {
  margin-left: 4px;
  font-size: 12px;
  font-weight: normal;
  line-height: 21px;
}

.desk {
  flex: 1;
  display: flex;
  align-items: flex-end;
  justify-content: flex-end;
  gap: 40px;
  padding-right: 88px;
}

.desk i {
  width: 36px;
  height: 13px;
  background: #a9c8ee;
  border-radius: 4px 8px 0 0;
  filter: blur(3px);
}

.desk i:first-child {
  margin-right: 150px;
}

.desk i:nth-child(2) {
  margin-right: 300px;
}

.window-buttons {
  display: flex;
  height: 18px;
  border: 1px solid #d3deea;
  border-top: none;
  border-radius: 0 0 5px 5px;
  overflow: hidden;
}

.window-buttons button {
  width: 28px;
  background: linear-gradient(#8fa3bd, #5c7699 50%, #476286 50%, #7990ad);
  border-right: 1px solid #c3cfdd;
}

.window-buttons .close {
  width: 47px;
  background: linear-gradient(#d99c8d, #c4503a 50%, #a52610 50%, #cf6545);
  border-right: none;
}

.window-buttons svg {
  width: 14px;
  height: 14px;
}

/* menu bar */
.menubar {
  display: flex;
  flex: none;
  align-items: center;
  gap: 14px;
  height: 20px;
  padding: 1px 1px 0 8px;
  background: linear-gradient(#fff, #f1f4fb 40%, #d8deee 55%, #dfe4f3);
  border-bottom: 1px solid #b9bccb;
}

.menubar u {
  padding-right: 1px;
}

.doc-icon {
  width: 16px;
  height: 16px;
  margin-right: -7px;
}

.help-search {
  width: 267px;
  height: 17px;
  margin-left: auto;
  padding: 0 2px;
  background: #fff;
}

.help-search::placeholder {
  color: #6d6d6d;
}

.search-buttons {
  display: flex;
  margin: 0 -11px 0 -14px;
  border: 1px solid #9ca3b0;
  border-radius: 3px;
}

.search-buttons button {
  width: 17px;
  height: 15px;
  background: #f6f7fa;
  border-left: 1px solid #9ca3b0;
}

.search-buttons .wide {
  width: 29px;
  border-left: none;
}

.search-buttons svg {
  height: 14px;
}

.mdi-buttons {
  display: flex;
  gap: 2px;
}

.mdi-buttons button {
  width: 17px;
  height: 18px;
  background: #e1ebf7;
  border: 1px solid #a5b3c4;
}

.mdi-buttons svg {
  width: 15px;
  height: 15px;
}

/* toolbars */
.toolbar-row {
  display: flex;
  flex: none;
  height: 28px;
  gap: 3px;
}

.toolbar-row + .toolbar-row {
  height: 27px;
}

.toolbar {
  display: flex;
  align-items: center;
  padding: 2px 3px 0 2px;
  border-right: 2px solid #a5a5a5;
  border-bottom: 1px solid #b5b5b5;
  box-shadow: inset 0 1px #fff;
}

.toolbar button {
  width: 23px;
  height: 23px;
}

.toolbar svg {
  width: 17px;
  height: 17px;
}

.toolbar .drop {
  width: 12px;
}

.drop::after {
  content: "";
  border: 3px solid transparent;
  border-top-color: #222;
  border-bottom: none;
}

.drop.off::after {
  border-top-color: #bbb;
}

.grip {
  flex: none;
  width: 8px;
  height: 24px;
  margin-right: 2px;
  border-left: 1px solid #aaa;
  border-right: 1px solid #aaa;
  background: linear-gradient(90deg, #fff 2px, #aaa 2px, #aaa 3px, #fff 3px);
}

.sep {
  width: 2px;
  height: 18px;
  margin: 0 2px;
  border-left: 1px solid #888;
  border-right: 1px solid #fff;
}

.combo {
  display: flex;
  align-items: center;
  height: 22px;
  position: relative;
  background: #fff;
  border: 1px solid #bdbdbd;
  border-radius: 2px;
}

.combo::after {
  content: "";
  position: absolute;
  right: 4px;
  top: 8px;
  border: 4px solid transparent;
  border-top: 5px solid #000;
  border-bottom: none;
  pointer-events: none;
}

.combo select {
  flex: 1;
  min-width: 0;
  height: 20px;
  padding: 0 3px;
  appearance: none;
}

.toolbar .combo {
  font-family: "Liberation Mono", "Noto Sans CJK SC", monospace;
  font-size: 10px;
}

.style {
  width: 120px;
}

.indent {
  padding-left: 15px;
}

.layer {
  width: 299px;
}

.layer .swatch {
  margin-left: 2px;
}

.color {
  width: 151px;
  padding-left: 5px;
}

.linetype {
  width: 158px;
  padding-left: 3px;
}

.weight {
  width: 126px;
  padding-left: 4px;
}

.toolbar .plot {
  font-size: 12px;
  background: #f0f0f0;
  color: #808080;
}

.plot select {
  padding-left: 8px;
  opacity: 1;
}

.plot::after {
  border-top-color: #aaa;
}

.swatch {
  flex: none;
  display: inline-block;
  width: 10px;
  height: 10px;
  border: 1px solid #000;
  background: #fff;
}

.stroke {
  display: inline-block;
  width: 36px;
  height: 1px;
  background: #000;
}

.stroke.long {
  width: 60px;
}

/* workspace */
.workspace {
  flex: 1;
  display: flex;
  min-height: 0;
  border-top: 2px solid #8b8b8b;
}

.properties {
  flex: none;
  display: flex;
  flex-direction: column;
  width: 296px;
  padding: 4px 17px 0 18px;
  background: #ebebeb;
  border-right: 2px solid #777;
  border-bottom: 1px solid #999;
}

.palette-head {
  display: flex;
  align-items: center;
  gap: 4px;
  height: 12px;
  margin: 0 -4px 7px -11px;
}

.palette-head button {
  width: 10px;
  height: 10px;
  border: 1px solid #222;
  border-radius: 2px;
  font-weight: bold;
  line-height: 8px;
}

.rails {
  flex: 1;
  height: 6px;
  border: solid #b0b0b0;
  border-width: 2px 0;
  background: #fff;
}

.selection {
  display: flex;
  gap: 5px;
  margin: 0 0 13px 2px;
}

.selection .combo {
  width: 180px;
  height: 25px;
  border-radius: 0;
}

.selection-buttons {
  display: flex;
  flex: 1;
  border: 1px solid #bdbdbd;
}

.selection-buttons button {
  flex: 1;
  height: 23px;
}

.selection-buttons button + button {
  border-left: 1px solid #bdbdbd;
}

.selection-buttons svg {
  width: 16px;
  height: 16px;
}

.properties h2 {
  display: flex;
  align-items: center;
  justify-content: space-between;
  flex: none;
  height: 26px;
  padding: 0 7px;
  background: #c0c0c0;
  border-radius: 6px 6px 0 0;
  font-size: 12px;
}

.properties h2 svg {
  width: 10px;
  height: 12px;
  fill: none;
  stroke: #fff;
  stroke-width: 2;
}

.properties table {
  flex: none;
  width: 243px;
  margin: 0 0 11px 16px;
  table-layout: fixed;
  border-spacing: 0;
  border-left: 1px solid #c0c0c0;
}

.properties th,
.properties td {
  height: 25px;
  border: solid #c0c0c0;
  border-width: 0 1px 1px 0;
  text-align: left;
  white-space: nowrap;
  font-weight: normal;
}

.properties th {
  width: 101px;
  padding: 0 0 2px 4px;
}

.properties td {
  padding: 2px 0 0 2px;
  background: #fff;
}

.properties .locked td {
  background: #ebebeb;
}

td .swatch,
td .stroke {
  margin-right: 6px;
}

td .stroke {
  margin-left: 3px;
  vertical-align: 4px;
}

td .swatch {
  margin-left: 1px;
  vertical-align: -1px;
}

.hint {
  height: 48px;
  margin: auto 0 11px 1px;
  border: 1px solid #c0c0c0;
}

.main {
  flex: 1;
  display: flex;
  flex-direction: column;
  min-width: 0;
}

.upper {
  flex: 1;
  display: flex;
  min-height: 0;
}

.side-column {
  flex: none;
  width: 27px;
}

.side-toolbar {
  display: flex;
  flex-direction: column;
  align-items: center;
  width: 25px;
  padding-bottom: 6px;
  border: solid #a5a5a5;
  border-width: 0 1px 1px 0;
}

.side-toolbar button {
  width: 22px;
  height: 22px;
}

.side-toolbar svg {
  width: 16px;
  height: 16px;
}

.side-toolbar .letter {
  font-size: 16px;
}

.grip-h {
  width: 19px;
  height: 6px;
  margin: 2px 0;
  border: solid #aaa;
  border-width: 1px 0;
  background: linear-gradient(#fff 2px, #aaa 2px, #aaa 3px, #fff 3px);
}

.modify {
  border-left: 2px solid #fff;
}

/* docked tool panel */
.tool-panel {
  flex: none;
  display: flex;
  flex-direction: column;
  width: 207px;
  margin-bottom: 4px;
  padding-right: 5px;
  background: #d5e2f7;
}

.tool-panel h2 {
  display: flex;
  align-items: center;
  justify-content: space-between;
  flex: none;
  height: 27px;
  margin-left: 4px;
  padding: 0 7px;
  background: linear-gradient(#e4eefc, #c9dcf8 50%, #a2c0ef);
  border-left: 2px dotted #1c3a7a;
  font-size: 12px;
  font-weight: normal;
}

.tool-panel h2 svg {
  width: 10px;
  height: 12px;
}

.panel-body {
  flex: 1;
  display: flex;
  flex-direction: column;
  min-height: 0;
  padding-right: 2px;
  background: #a0bdf5;
  border-top: 1px solid #666;
  border-left: 2px solid #777;
}

.panel-menu {
  flex: none;
  height: 41px;
  margin-left: 6px;
  padding: 2px 0 0 9px;
  border-left: 2px dotted #1c3a7a;
  line-height: 23px;
  overflow: hidden;
}

.panel-menu a {
  margin-right: 16px;
}

.panel-columns {
  flex: 1;
  display: flex;
  min-height: 0;
}

.icon-strip {
  width: 24px;
  padding-top: 13px;
}

.strip-items {
  display: flex;
  flex-direction: column;
  align-items: center;
  padding-top: 10px;
  background: linear-gradient(90deg, #dfeafc, #a9c5f4);
}

.strip-items::before {
  content: "";
  width: 13px;
  margin-top: -7px;
  margin-bottom: 1px;
  border-top: 2px dotted #1c3a7a;
}

.strip-items button {
  height: 22px;
}

.strip-items svg {
  width: 16px;
  height: 16px;
}

.strip-items hr {
  width: 14px;
  height: 6px;
  border: none;
  background: linear-gradient(transparent 3px, #fff 3px, #fff 4px, transparent 4px);
}

.more {
  width: 24px;
  height: 11px;
  margin-top: 2px;
  padding-left: 12px;
  background: linear-gradient(90deg, #9dbcf0, #2c62bd);
}

.more svg {
  width: 10px;
  height: 8px;
}

.outlook {
  flex: 1;
  display: flex;
  flex-direction: column;
  border: 1px solid #10307a;
}

.group {
  height: 22px;
  background: linear-gradient(#d8e7fb, #c5daf8 45%, #88aee6);
  border-bottom: 1px solid #0a2f80;
}

.outlook ul {
  flex: 1;
  list-style: none;
  padding: 5px 8px;
  background: linear-gradient(#5b8adb, #3e6cc8 30%, #002a93);
}

.outlook a {
  display: flex;
  align-items: center;
  gap: 7px;
  height: 21px;
  padding-left: 1px;
  border: 1px solid transparent;
  color: #fff;
}

.outlook a.selected {
  background: #ffc273;
  border-color: #10104a;
  color: #111;
}

.outlook a svg {
  width: 16px;
  height: 16px;
}

.panel-tabs {
  display: flex;
  flex: none;
  height: 25px;
  padding-left: 1px;
  background: linear-gradient(90deg, #a9c5f4, #f4f8fe);
  border-top: 4px solid #f0f0f0;
}

.panel-tabs button {
  width: 36px;
  height: 20px;
  background: linear-gradient(#dbe8fc, #aac6f4);
  border: 1px solid #5c83c4;
  border-top: none;
}

.panel-tabs .active {
  background: #ffd08f;
}

/* drawing area */
.drawing {
  flex: 1;
  display: flex;
  flex-direction: column;
  min-width: 0;
  border-left: 1px solid #555;
}

.model-space {
  flex: 1;
  width: 100%;
  min-height: 0;
  background: #000;
}

.pipes path {
  fill: none;
  stroke: #43301f;
}

.pipes .water {
  stroke: #1414c8;
}

.model-space text {
  font-family: "Noto Sans CJK SC", sans-serif;
}

.note {
  fill: #fff;
  font-size: 34px;
}

.point-name {
  fill: #0000e6;
  font-size: 39px;
}

.pipe-name {
  fill: #4d2a0e;
  font-size: 37px;
}

.pipe-name .han {
  font-size: 43px;
}

.pipe-name .water {
  fill: #0000e6;
}

.ucs path {
  fill: none;
  stroke: #fff;
}

.model-space .ucs text {
  fill: #d0d0d0;
  font-family: Lato, sans-serif;
  font-size: 24px;
  font-weight: 300;
}

.layout-tabs,
.doc-tabs {
  display: flex;
  flex: none;
  height: 17px;
}

.layout-tabs {
  border-top: 1px solid #777;
  border-bottom: 1px solid #fff;
}

.doc-tabs {
  height: 18px;
  margin: 1px 0 3px;
  border-top: 1px solid #000;
}

.tab-nav {
  display: flex;
  margin-right: 5px;
}

.tab-nav button {
  width: 14px;
  border: 1px solid #bbb;
  border-width: 0 1px 1px 0;
}

.tab-nav svg {
  width: 12px;
  height: 12px;
  fill: #777;
  stroke: #777;
}

.doc-tabs .tab-nav button {
  height: 16px;
  border-color: #333;
}

.doc-tabs .tab-nav svg {
  fill: #000;
  stroke: #000;
}

.layout {
  padding: 0 7px;
  border-right: 1px solid #777;
  transform: skewX(-20deg);
}

.layout span {
  transform: skewX(20deg);
}

.layout.active {
  background: #000;
  color: #fff;
}

.doc {
  height: 15px;
  padding: 0 7px;
  background: #fff;
  border-right: 1px solid #000;
  transform: skewX(-20deg);
  font-family: "Liberation Sans", sans-serif;
  font-size: 11px;
  font-weight: bold;
}

.doc span {
  transform: skewX(20deg);
}

/* command line */
.command {
  display: flex;
  flex: none;
  height: 87px;
  padding: 10px 8px 1px 7px;
  border-top: 2px solid #777;
  border-bottom: 2px solid #a0a0a0;
}

.command .grip {
  height: 68px;
}

.command-window {
  flex: 1;
  background: #fff;
  border-top: 1px solid #666;
  border-left: 1px solid #666;
  font-family: "Liberation Mono", "Noto Sans CJK SC", monospace;
  font-size: 14px;
}

.history {
  display: flex;
  justify-content: space-between;
  height: 57px;
  border-bottom: 1px solid #999;
}

.lines p {
  padding-left: 1px;
  height: 14px;
  line-height: 14px;
  white-space: pre;
}

.prompt {
  display: flex;
  align-items: center;
  height: 16px;
}

.prompt label {
  padding-left: 1px;
}

.prompt input {
  flex: 1;
  height: 16px;
  outline: none;
}

.scroll {
  display: flex;
  align-items: center;
  justify-content: space-between;
  width: 68px;
  height: 15px;
  margin-right: 18px;
  padding: 0 4px;
  background: #f0f0f0;
  font-size: 10px;
  line-height: 10px;
}

.scroll b {
  width: 14px;
  height: 13px;
  margin-right: 14px;
  background: linear-gradient(#fafafa, #dcdcdc);
  border: 1px solid #999;
}

.scroll.vertical {
  flex-direction: column;
  width: 16px;
  height: 56px;
  margin-right: 0;
  padding: 3px 0;
}

.vertical b {
  margin-right: 0;
}

/* status bar */
.statusbar {
  display: flex;
  flex: none;
  align-items: center;
  gap: 4px;
  height: 23px;
  padding: 3px 4px 0 7px;
  background: #f0eded;
}

.version,
.coords,
.statusbar .latin {
  font-family: "Liberation Mono", monospace;
  font-size: 10px;
}

.coords {
  width: 260px;
  height: 18px;
  margin: 0 1px 0 2px;
  padding-left: 2px;
  border: 1px solid #aaa;
  line-height: 17px;
}

.statusbar button {
  height: 18px;
  padding: 0 1px;
  border: solid #999;
  border-width: 0 2px 1px 0;
}

.statusbar .on {
  border-color: #111;
  border-width: 1px 0 0 1px;
}

.statusbar .latin {
  padding: 0 2px;
}

.status-right {
  display: flex;
  align-items: center;
  gap: 7px;
  margin-left: auto;
}

.scale {
  margin-left: 3px;
}

.triangle {
  border: 4px solid transparent;
  border-top: 5px solid #000;
  border-bottom: none;
}

.status-right svg {
  width: 17px;
  height: 17px;
}

.lock {
  padding: 0 2px;
  border: 1px solid #aaa;
}

.statusbar .clean {
  width: 16px;
  height: 16px;
  background: linear-gradient(#c5dcf2, #8fb4da);
  border: 2px solid #1c4b78;
}

/* top edge of the system taskbar */
.taskbar {
  display: flex;
  flex: none;
  gap: 3px;
  height: 8px;
  padding-left: 62px;
  background: linear-gradient(90deg, #1f5c86, #2b76a8 40%, #1a5a98 60%, #164273);
  border-top: 2px solid #173a5a;
}

.taskbar i {
  width: 158px;
  background: #8bb4c9;
  border: 1px solid #cfe2ec;
  border-bottom: none;
}

/* floating input method bar */
.ime {
  position: absolute;
  right: 258px;
  bottom: 30px;
  width: 206px;
}

.ime-tip {
  width: 128px;
  margin-bottom: 9px;
  padding: 6px 9px;
  background: #fff;
  border: 1px solid #a5a5a5;
  box-shadow: 0 0 3px #ccc;
  white-space: nowrap;
}

.ime-tip::after {
  content: "";
  position: absolute;
  left: 9px;
  top: 26px;
  width: 7px;
  height: 7px;
  background: #fff;
  border: solid #a5a5a5;
  border-width: 0 1px 1px 0;
  transform: rotate(45deg);
}

.ime-bar {
  display: flex;
  align-items: center;
  gap: 6px;
  height: 23px;
  margin-left: 14px;
  padding-right: 3px;
  background: #fff;
  border: 1px solid #b5b5b5;
}

.ime-bar svg {
  width: 16px;
  height: 16px;
}

.ime-bar .ime-logo {
  width: 27px;
  height: 27px;
  margin: -4px 0 0 -14px;
}
```
